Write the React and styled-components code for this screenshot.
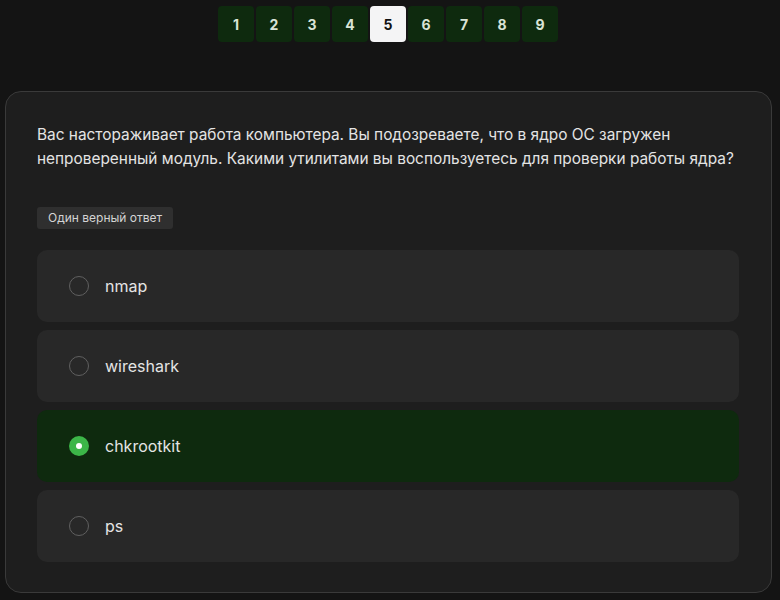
import React, { useState } from "react";
import styled, { createGlobalStyle } from "styled-components";

const GlobalStyle = createGlobalStyle`
  html, body {
    margin: 0;
    background: #141414;
    font-family: Inter, "Noto Sans", sans-serif;
  }
  * { box-sizing: border-box; }
`;

const Page = styled.div`
  padding: 6px 8px 0 5px;
`;

const Pager = styled.div`
  display: flex;
  justify-content: center;
  gap: 2px;
  padding-right: 1px;
`;

const PageButton = styled.button`
  width: 36px;
  height: 36px;
  border: none;
  border-radius: 4px;
  padding: 0;
  font-family: inherit;
  font-size: 14px;
  font-weight: 700;
  cursor: pointer;
  background: ${(p) => (p.active ? "#f4f4f5" : "#0e2a0e")};
  color: ${(p) => (p.active ? "#111" : "#d9e3d6")};
`;

const Card = styled.div`
  margin-top: 49px;
  background: #1e1e1e;
  border: 1px solid #3a3a3a;
  border-radius: 16px;
  padding: 31px 32px 30px 31px;
`;

const Question = styled.p`
  margin: 0;
  font-size: 15.4px;
  line-height: 24px;
  color: #e4e4e4;
`;

const Badge = styled.span`
  display: inline-block;
  margin-top: 36px;
  padding: 0 11px;
  height: 22px;
  line-height: 22px;
  border-radius: 3px;
  background: #2f2f2f;
  color: #d4d4d4;
  font-size: 12px;
`;

const Options = styled.div`
  display: flex;
  flex-direction: column;
  gap: 8px;
  margin-top: 21px;
`;

const Option = styled.label`
  display: flex;
  align-items: center;
  gap: 16px;
  height: 72px;
  padding: 0 32px;
  border-radius: 10px;
  background: ${(p) => (p.selected ? "#0e2a0e" : "#282828")};
  color: #e4e4e4;
  font-size: 16px;
  cursor: pointer;
`;

const Radio = styled.span`
  width: 20px;
  height: 20px;
  border-radius: 50%;
  flex-shrink: 0;
  display: flex;
  align-items: center;
  justify-content: center;
  border: ${(p) => (p.checked ? "none" : "1px solid #606060")};
  background: ${(p) => (p.checked ? "#3cb648" : "transparent")};
  &::after {
    content: "";
    display: ${(p) => (p.checked ? "block" : "none")};
    width: 6px;
    height: 6px;
    border-radius: 50%;
    background: #fff;
  }
`;

const answers = ["nmap", "wireshark", "chkrootkit", "ps"];

export default function App() {
  const [picked, setPicked] = useState(2);
  return (
    <Page>
      <GlobalStyle />
      <Pager>
        {[1, 2, 3, 4, 5, 6, 7, 8, 9].map((n) => (
          <PageButton key={n} active={n === 5}>
            {n}
          </PageButton>
        ))}
      </Pager>
      <Card>
        <Question>
          Вас настораживает работа компьютера. Вы подозреваете, что в ядро ОС загружен
          непроверенный модуль. Какими утилитами вы воспользуетесь для проверки работы ядра?
        </Question>
        <Badge>Один верный ответ</Badge>
        <Options>
          {answers.map((a, i) => (
            <Option key={a} selected={picked === i} onClick={() => setPicked(i)}>
              <Radio checked={picked === i} />
              {a}
            </Option>
          ))}
        </Options>
      </Card>
    </Page>
  );
}
